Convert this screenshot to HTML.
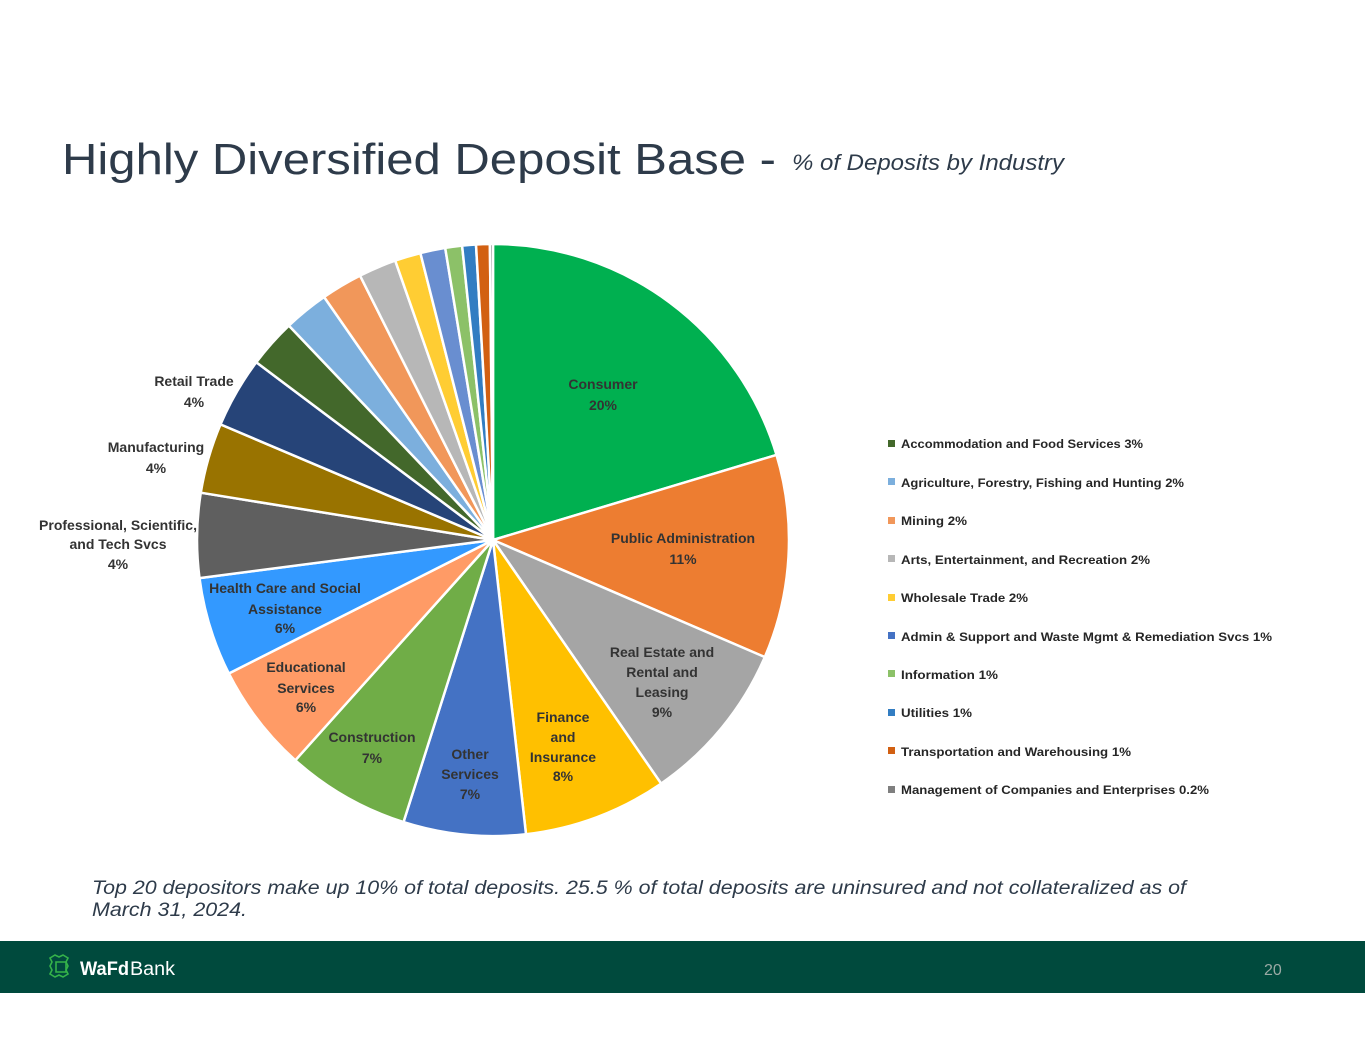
<!DOCTYPE html>
<html><head><meta charset="utf-8"><style>
html,body{margin:0;padding:0;background:#fff;}
body{width:1365px;height:1055px;position:relative;overflow:hidden;font-family:"Liberation Sans",sans-serif;}
svg{position:absolute;left:0;top:0;}
</style></head><body>
<svg width="1365" height="1055" viewBox="0 0 1365 1055" xmlns="http://www.w3.org/2000/svg">
<text x="62" y="174" font-family="Liberation Sans" font-size="44" fill="#2e3b4a" textLength="714" lengthAdjust="spacingAndGlyphs">Highly Diversified Deposit Base -</text>
<text x="792" y="170" font-family="Liberation Sans" font-style="italic" font-size="22" fill="#2e3b4a" textLength="272" lengthAdjust="spacingAndGlyphs">% of Deposits by Industry</text>

<g stroke="#fff" stroke-width="2.5" stroke-linejoin="round">
<path d="M493 540 L493 244 A296 296 0 0 1 776.5 454.9Z" fill="#00b050"/>
<path d="M493 540 L776.5 454.9 A296 296 0 0 1 764.8 657.1Z" fill="#ed7d31"/>
<path d="M493 540 L764.8 657.1 A296 296 0 0 1 661.1 783.6Z" fill="#a5a5a5"/>
<path d="M493 540 L661.1 783.6 A296 296 0 0 1 526 834.2Z" fill="#ffc000"/>
<path d="M493 540 L526 834.2 A296 296 0 0 1 403.5 822.1Z" fill="#4472c4"/>
<path d="M493 540 L403.5 822.1 A296 296 0 0 1 295.3 760.3Z" fill="#70ad47"/>
<path d="M493 540 L295.3 760.3 A296 296 0 0 1 228.8 673.5Z" fill="#ff9b66"/>
<path d="M493 540 L228.8 673.5 A296 296 0 0 1 199.5 578.1Z" fill="#3399ff"/>
<path d="M493 540 L199.5 578.1 A296 296 0 0 1 200.8 492.7Z" fill="#5f5f5f"/>
<path d="M493 540 L200.8 492.7 A296 296 0 0 1 220.5 424.4Z" fill="#997300"/>
<path d="M493 540 L220.5 424.4 A296 296 0 0 1 256.3 362.3Z" fill="#264478"/>
<path d="M493 540 L256.3 362.3 A296 296 0 0 1 288.9 325.6Z" fill="#43682b"/>
<path d="M493 540 L288.9 325.6 A296 296 0 0 1 324.1 297Z" fill="#7cafdd"/>
<path d="M493 540 L324.1 297 A296 296 0 0 1 360 275.6Z" fill="#f1975a"/>
<path d="M493 540 L360 275.6 A296 296 0 0 1 395.2 260.6Z" fill="#b7b7b7"/>
<path d="M493 540 L395.2 260.6 A296 296 0 0 1 420.4 253.1Z" fill="#ffcd33"/>
<path d="M493 540 L420.4 253.1 A296 296 0 0 1 445.2 247.9Z" fill="#698ed0"/>
<path d="M493 540 L445.2 247.9 A296 296 0 0 1 462.1 245.6Z" fill="#8cc168"/>
<path d="M493 540 L462.1 245.6 A296 296 0 0 1 476 244.5Z" fill="#327dc2"/>
<path d="M493 540 L476 244.5 A296 296 0 0 1 489.9 244Z" fill="#d26012"/>
<path d="M493 540 L489.9 244 A296 296 0 0 1 493 244Z" fill="#7f7f7f"/>
</g>

<g font-family="Liberation Sans" font-weight="bold" font-size="14" fill="#333" text-anchor="middle">
<text x="603" y="389">Consumer</text><text x="603" y="410">20%</text>
<text x="683" y="543">Public Administration</text><text x="683" y="564">11%</text>
<text x="662" y="657">Real Estate and</text><text x="662" y="677">Rental and</text><text x="662" y="697">Leasing</text><text x="662" y="717">9%</text>
<text x="563" y="722">Finance</text><text x="563" y="742">and</text><text x="563" y="762">Insurance</text><text x="563" y="781">8%</text>
<text x="470" y="759">Other</text><text x="470" y="779">Services</text><text x="470" y="799">7%</text>
<text x="372" y="742">Construction</text><text x="372" y="763">7%</text>
<text x="306" y="672">Educational</text><text x="306" y="693">Services</text><text x="306" y="712">6%</text>
<text x="285" y="593">Health Care and Social</text><text x="285" y="614">Assistance</text><text x="285" y="633">6%</text>
<text x="118" y="530">Professional, Scientific,</text><text x="118" y="549">and Tech Svcs</text><text x="118" y="569">4%</text>
<text x="156" y="452">Manufacturing</text><text x="156" y="473">4%</text>
<text x="194" y="386">Retail Trade</text><text x="194" y="407">4%</text>
</g>

<g font-family="Liberation Sans" font-weight="bold" font-size="12" fill="#262626">
<rect x="888" y="440" width="7" height="7" fill="#43682b"/><text x="901" y="448" textLength="242" lengthAdjust="spacingAndGlyphs">Accommodation and Food Services 3%</text>
<rect x="888" y="478" width="7" height="7" fill="#7cafdd"/><text x="901" y="487" textLength="283" lengthAdjust="spacingAndGlyphs">Agriculture, Forestry, Fishing and Hunting 2%</text>
<rect x="888" y="517" width="7" height="7" fill="#f1975a"/><text x="901" y="525" textLength="66" lengthAdjust="spacingAndGlyphs">Mining 2%</text>
<rect x="888" y="555" width="7" height="7" fill="#b7b7b7"/><text x="901" y="564" textLength="249" lengthAdjust="spacingAndGlyphs">Arts, Entertainment, and Recreation 2%</text>
<rect x="888" y="594" width="7" height="7" fill="#ffcd33"/><text x="901" y="602" textLength="127" lengthAdjust="spacingAndGlyphs">Wholesale Trade 2%</text>
<rect x="888" y="632" width="7" height="7" fill="#4472c4"/><text x="901" y="641" textLength="371" lengthAdjust="spacingAndGlyphs">Admin &amp; Support and Waste Mgmt &amp; Remediation Svcs 1%</text>
<rect x="888" y="670" width="7" height="7" fill="#8cc168"/><text x="901" y="679" textLength="97" lengthAdjust="spacingAndGlyphs">Information 1%</text>
<rect x="888" y="709" width="7" height="7" fill="#327dc2"/><text x="901" y="717" textLength="71" lengthAdjust="spacingAndGlyphs">Utilities 1%</text>
<rect x="888" y="747" width="7" height="7" fill="#d26012"/><text x="901" y="756" textLength="230" lengthAdjust="spacingAndGlyphs">Transportation and Warehousing 1%</text>
<rect x="888" y="786" width="7" height="7" fill="#7f7f7f"/><text x="901" y="794" textLength="308" lengthAdjust="spacingAndGlyphs">Management of Companies and Enterprises 0.2%</text>
</g>

<g font-family="Liberation Sans" font-style="italic" font-size="19" fill="#2e3b4a">
<text x="92" y="894" textLength="1094" lengthAdjust="spacingAndGlyphs">Top 20 depositors make up 10% of total deposits.  25.5 % of total deposits are uninsured and not collateralized as of</text>
<text x="92" y="916" textLength="155" lengthAdjust="spacingAndGlyphs">March 31, 2024.</text>
</g>

<rect x="0" y="941" width="1365" height="52" fill="#004a3d"/>
<g fill="none" stroke="#35b34a" stroke-width="1.6">
<path d="M50 958 l5 -3 l4 2 l4 -2 l5 3 l-2 4 l2 4 l-2 4 l2 4 l-5 3 l-4 -2 l-4 2 l-5 -3 l2 -4 l-2 -4 l2 -4z"/>
<path d="M56 962 h10 v10 h-10z"/>
</g>
<text x="80" y="975" font-family="Liberation Sans" font-weight="bold" font-size="19" fill="#fff" textLength="49" lengthAdjust="spacingAndGlyphs">WaFd</text>
<text x="130" y="975" font-family="Liberation Sans" font-size="19" fill="#fff" textLength="45" lengthAdjust="spacingAndGlyphs">Bank</text>
<text x="1264" y="975" font-family="Liberation Sans" font-size="16" fill="#9aa9a4">20</text>
</svg>
</body></html>
